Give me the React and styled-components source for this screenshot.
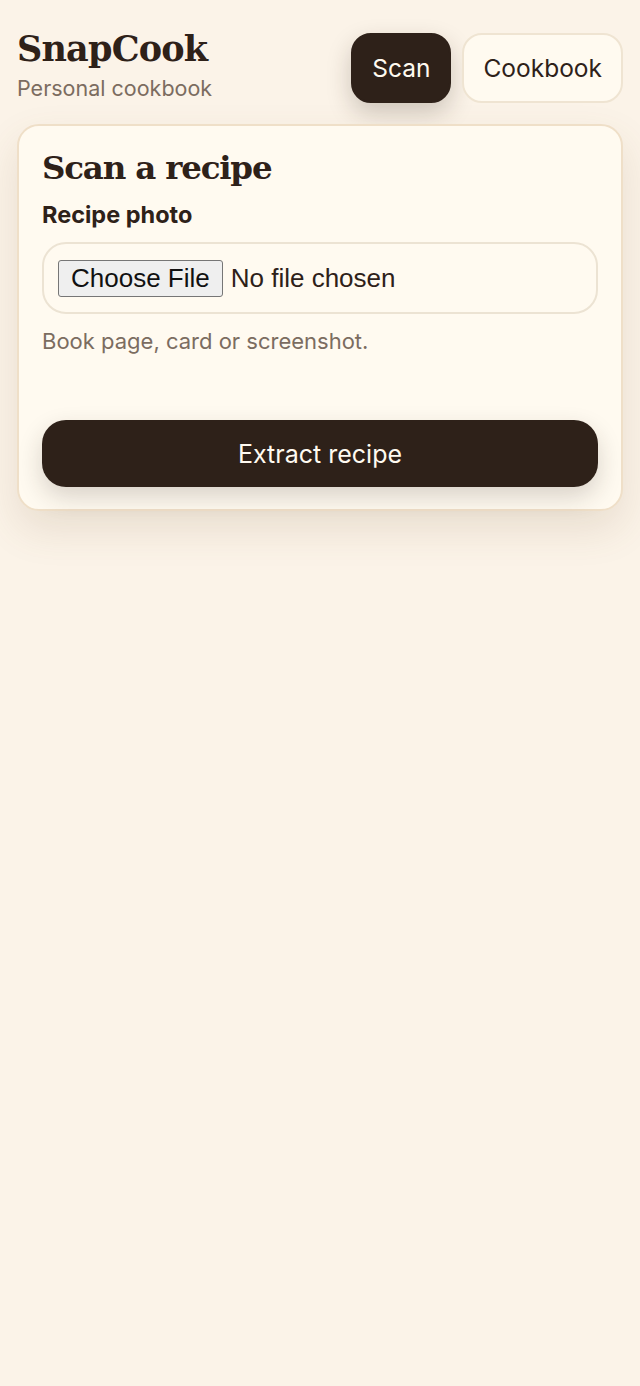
import styled, { createGlobalStyle } from "styled-components";

const GlobalStyle = createGlobalStyle`
  html, body {
    margin: 0;
    padding: 0;
    background: #fbf3e8;
  }
  body {
    font-family: Inter, "Liberation Sans", sans-serif;
    color: #2e2119;
    min-height: 1386px;
  }
`;

const Page = styled.div`
  padding: 28px 17px 40px;
  display: flex;
  flex-direction: column;
  gap: 21px;
`;

const Header = styled.header`
  display: flex;
  justify-content: space-between;
  align-items: stretch;
`;

const Brand = styled.div`
  display: flex;
  flex-direction: column;
`;

const Logo = styled.h1`
  margin: 0;
  font-family: "DejaVu Serif", Georgia, serif;
  font-weight: 700;
  font-size: 35px;
  line-height: 42px;
  letter-spacing: -0.8px;
  color: #2e2119;
`;

const Tagline = styled.span`
  margin-top: 3px;
  font-size: 21.5px;
  line-height: 30px;
  color: #7b6c60;
`;

const Nav = styled.nav`
  display: flex;
  gap: 11px;
  margin-top: 5px;
`;

const NavButton = styled.button`
  height: 70px;
  padding: 0 19px;
  border-radius: 20px;
  font-family: Inter, "Liberation Sans", sans-serif;
  font-size: 24.5px;
  cursor: pointer;
  border: 2px solid ${(p) => (p.$active ? "#2e2119" : "#efe4d2")};
  background: ${(p) => (p.$active ? "#2e2119" : "#fffaf0")};
  color: ${(p) => (p.$active ? "#fffaf0" : "#2e2119")};
  box-shadow: ${(p) =>
    p.$active ? "0 10px 24px rgba(46, 33, 25, 0.22)" : "none"};
`;

const Card = styled.section`
  background: #fffaf0;
  border: 2px solid #efdfc8;
  border-radius: 22px;
  padding: 20px 23px 22px;
  box-shadow: 0 18px 40px rgba(120, 90, 60, 0.14);
  display: flex;
  flex-direction: column;
`;

const CardTitle = styled.h2`
  margin: 0;
  font-family: "DejaVu Serif", Georgia, serif;
  font-weight: 700;
  font-size: 32.5px;
  line-height: 44px;
  letter-spacing: -1.2px;
`;

const Label = styled.label`
  margin-top: 10px;
  font-size: 23.5px;
  font-weight: 700;
  line-height: 30px;
`;

const FileBox = styled.div`
  margin-top: 12px;
  height: 72px;
  box-sizing: border-box;
  border: 2px solid #ece3d3;
  border-radius: 24px;
  padding: 0 14px;
  display: flex;
  align-items: center;
`;

const FileInput = styled.input`
  font-family: "Liberation Sans", Arial, sans-serif;
  font-size: 26px;
  color: #2e2119;

  &::file-selector-button {
    font-family: "Liberation Sans", Arial, sans-serif;
    font-size: 26px;
    color: #111;
    background: #efefef;
    border: 1px solid #767676;
    border-radius: 3px;
    padding: 2px 12px;
    margin-right: 8px;
  }
`;

const Hint = styled.p`
  margin: 13px 0 0;
  font-size: 22px;
  line-height: 28px;
  color: #7b6c60;
`;

const Submit = styled.button`
  margin-top: 65px;
  height: 67px;
  border: none;
  border-radius: 24px;
  background: #2e2119;
  color: #fffaf0;
  font-family: Inter, "Liberation Sans", sans-serif;
  font-size: 25px;
  cursor: pointer;
  box-shadow: 0 10px 24px rgba(46, 33, 25, 0.18);
`;

export default function App() {
  return (
    <>
      <GlobalStyle />
      <Page>
        <Header>
          <Brand>
            <Logo>SnapCook</Logo>
            <Tagline>Personal cookbook</Tagline>
          </Brand>
          <Nav>
            <NavButton $active>Scan</NavButton>
            <NavButton>Cookbook</NavButton>
          </Nav>
        </Header>
        <Card>
          <CardTitle>Scan a recipe</CardTitle>
          <Label htmlFor="photo">Recipe photo</Label>
          <FileBox>
            <FileInput id="photo" type="file" accept="image/*" />
          </FileBox>
          <Hint>Book page, card or screenshot.</Hint>
          <Submit type="button">Extract recipe</Submit>
        </Card>
      </Page>
    </>
  );
}
